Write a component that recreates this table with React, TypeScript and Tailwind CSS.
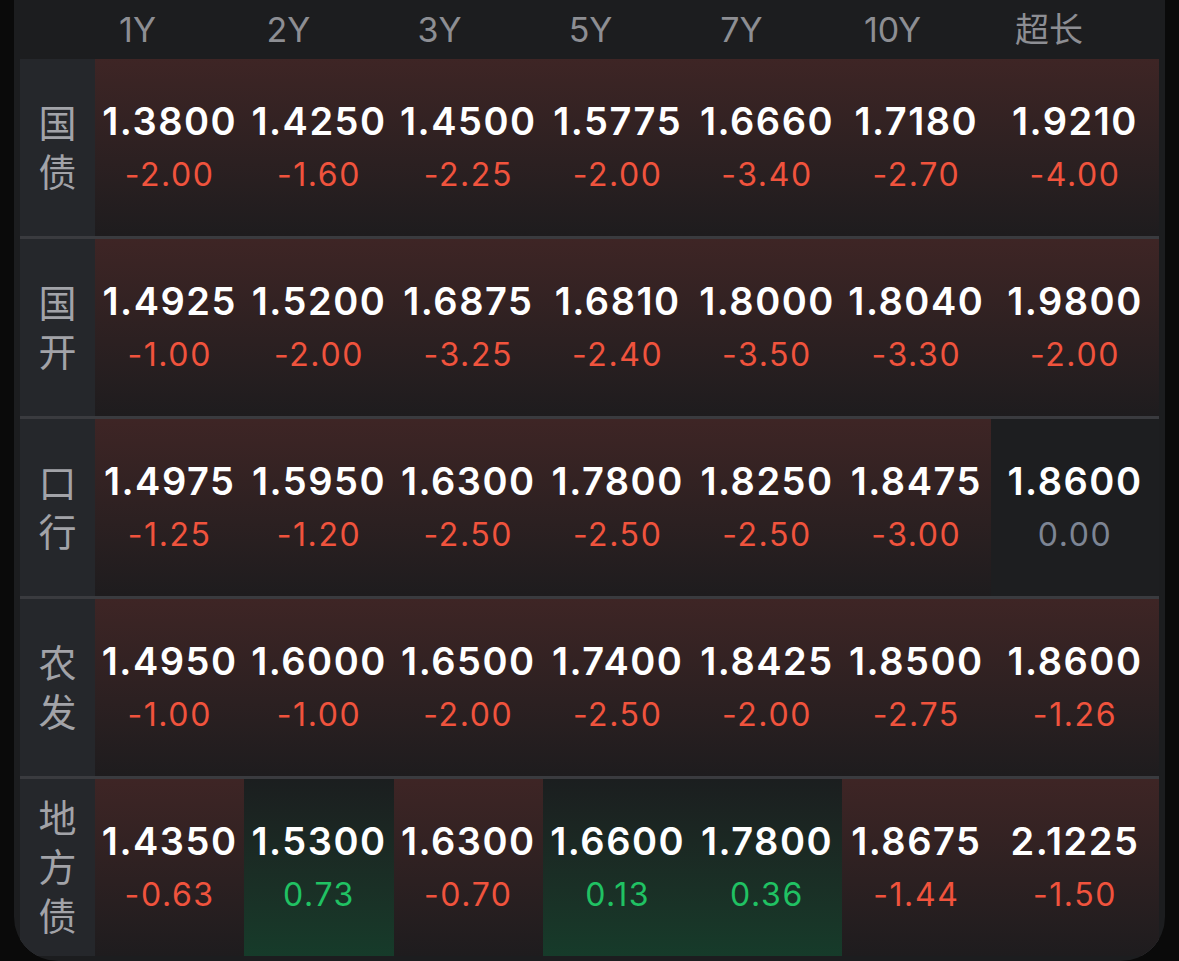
const terms = ["1Y", "2Y", "3Y", "5Y", "7Y", "10Y", "超长"];

type Cell = [string, string];

const rows: { name: string[]; cells: Cell[] }[] = [
  {
    name: ["国", "债"],
    cells: [
      ["1.3800", "-2.00"],
      ["1.4250", "-1.60"],
      ["1.4500", "-2.25"],
      ["1.5775", "-2.00"],
      ["1.6660", "-3.40"],
      ["1.7180", "-2.70"],
      ["1.9210", "-4.00"],
    ],
  },
  {
    name: ["国", "开"],
    cells: [
      ["1.4925", "-1.00"],
      ["1.5200", "-2.00"],
      ["1.6875", "-3.25"],
      ["1.6810", "-2.40"],
      ["1.8000", "-3.50"],
      ["1.8040", "-3.30"],
      ["1.9800", "-2.00"],
    ],
  },
  {
    name: ["口", "行"],
    cells: [
      ["1.4975", "-1.25"],
      ["1.5950", "-1.20"],
      ["1.6300", "-2.50"],
      ["1.7800", "-2.50"],
      ["1.8250", "-2.50"],
      ["1.8475", "-3.00"],
      ["1.8600", "0.00"],
    ],
  },
  {
    name: ["农", "发"],
    cells: [
      ["1.4950", "-1.00"],
      ["1.6000", "-1.00"],
      ["1.6500", "-2.00"],
      ["1.7400", "-2.50"],
      ["1.8425", "-2.00"],
      ["1.8500", "-2.75"],
      ["1.8600", "-1.26"],
    ],
  },
  {
    name: ["地", "方", "债"],
    cells: [
      ["1.4350", "-0.63"],
      ["1.5300", "0.73"],
      ["1.6300", "-0.70"],
      ["1.6600", "0.13"],
      ["1.7800", "0.36"],
      ["1.8675", "-1.44"],
      ["2.1225", "-1.50"],
    ],
  },
];

const tone = (chg: string) => {
  const v = parseFloat(chg);
  if (v < 0)
    return {
      bg: "bg-gradient-to-b from-[#3e2525] to-[#1e1c1e]",
      text: "text-[#f0533d]",
    };
  if (v > 0)
    return {
      bg: "bg-gradient-to-b from-[#1b1e1f] to-[#163b2a]",
      text: "text-[#20c263]",
    };
  return { bg: "bg-[#1d1e20]", text: "text-[#7d8594]" };
};

const YieldCell = ({ value, chg }: { value: string; chg: string }) => {
  const t = tone(chg);
  return (
    <div className={`flex flex-col items-center justify-center pb-[3px] ${t.bg}`}>
      <div className="text-[38px] leading-[46px] font-semibold tracking-[1.5px] text-white">
        {value}
      </div>
      <div className={`mt-[11px] text-[32px] leading-[40px] font-normal tracking-[1.6px] ${t.text}`}>
        {chg}
      </div>
    </div>
  );
};

export default function App() {
  return (
    <div
      className="h-[961px] w-[1179px] overflow-hidden bg-[#0a0a0a]"
      style={{ fontFamily: "Inter, 'Noto Sans CJK SC', sans-serif" }}
    >
      <div className="ml-[14px] h-[961px] w-[1151px] overflow-hidden rounded-b-[44px] bg-[#1c1d1f] px-[6px]">
        {/* term header */}
        <div className="grid h-[59px] grid-cols-[repeat(6,151px)_162px] items-center pl-[42px] text-[34px] text-[#8d8e93]">
          {terms.map((t) => (
            <div key={t} className="text-center">
              {t}
            </div>
          ))}
        </div>

        {/* rows */}
        <div className="flex flex-col gap-[3px] bg-[#3a3b3f]">
          {rows.map((row) => (
            <div
              key={row.name.join("")}
              className="grid h-[177px] grid-cols-[75px_repeat(6,minmax(0,1fr))_168px]"
            >
              <div className="flex flex-col items-center justify-center bg-[#25272b] text-[38px] leading-[49px] text-[#a2a3a8]">
                {row.name.map((c, i) => (
                  <span key={i}>{c}</span>
                ))}
              </div>
              {row.cells.map(([v, c], i) => (
                <YieldCell key={i} value={v} chg={c} />
              ))}
            </div>
          ))}
        </div>
      </div>
    </div>
  );
}
